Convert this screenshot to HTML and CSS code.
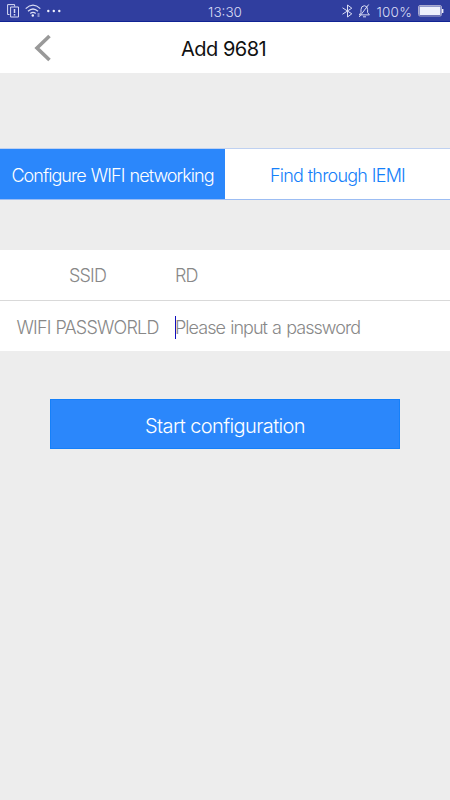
FILE: index.html
```html
<!DOCTYPE html>
<html lang="en">
<head>
    <meta charset="UTF-8">
    <meta name="viewport" content="width=device-width, initial-scale=1.0">
    <title>Add 9681</title>
    <link rel="stylesheet" href="styles.css">
</head>
<body>
    <div class="statusbar">
        <div class="status-left">
            <svg width="13" height="14" viewBox="0 0 13 14">
                <path d="M2.5 10.5H.6V.6h7v1.9M3.6 3h7.9v10H3.6z"/>
                <path d="M7.5 5v4M7.5 10v1.4" stroke-width="1.5"/>
            </svg>
            <svg width="17" height="14" viewBox="0 0 17 14">
                <path d="M.7 4.6Q8 -2.4 15.3 4.6M3 7.3q5-4.6 10 0M5.3 9.6q2.7-2.4 5.4 0" stroke-width="1.3"/>
                <circle class="fill" cx="7.8" cy="11.5" r="1.2"/>
                <path d="M12.5 10h2M12.5 12h2"/>
            </svg>
            <svg class="dots" width="14" height="14" viewBox="0 0 14 14">
                <circle class="fill" cx="1.3" cy="7" r="1.2"/>
                <circle class="fill" cx="6.8" cy="7" r="1.2"/>
                <circle class="fill" cx="12.3" cy="7" r="1.2"/>
            </svg>
        </div>
        <span class="time">13:30</span>
        <div class="status-right">
            <svg width="11" height="14" viewBox="0 0 11 14">
                <path d="M.5 3.8l9.3 6L5.5 13V1l4.3 3.2-9.3 6"/>
            </svg>
            <svg class="bell" width="13" height="14" viewBox="0 0 13 14">
                <path d="M3 8.5V5.5Q3 2 6.3 1.7 9.6 2 9.6 5.5v3l1.8 2.4H1.2zM5 12.8h3M10.7.5L1.2 13"/>
            </svg>
            <span class="percent">100%</span>
            <svg class="battery" width="26" height="12" viewBox="0 0 26 12">
                <rect x=".5" y=".5" width="23" height="10.5" rx="1.5" stroke="#a9a9cf"/>
                <rect class="fill" x="1.5" y="1.5" width="21" height="8.5"/>
                <rect class="fill" x="24" y="4" width="1.4" height="4"/>
            </svg>
        </div>
    </div>

    <div class="header">
        <svg class="back" width="18" height="28" viewBox="0 0 18 28">
            <path d="M15.5 2L3 14l12.5 12"/>
        </svg>
        <h1>Add 9681</h1>
    </div>

    <div class="tabs">
        <div class="tab active"><span>Configure WIFI networking</span></div>
        <div class="tab"><span>Find through IEMI</span></div>
    </div>

    <div class="form">
        <div class="row">
            <div class="label">SSID</div>
            <div class="value">RD</div>
        </div>
        <div class="row">
            <div class="label">WIFI PASSWORLD</div>
            <div class="value hint">Please input a password</div>
        </div>
    </div>

    <button class="start">Start configuration</button>
</body>
</html>
```
FILE: styles.css
```css
body {
    margin: 0;
    height: 800px;
    background-color: #ededed;
    font-family: Inter, "Liberation Sans", sans-serif;
    font-weight: 300;
    font-size: 18px;
    letter-spacing: -0.8px;
    word-spacing: 0.5px;
    overflow: hidden;
}
.statusbar {
    display: grid;
    grid-template-columns: 1fr auto 1fr;
    align-items: center;
    height: 22px;
    box-sizing: border-box;
    border-bottom: 1px solid #102394;
    padding: 1px 7px 0;
    background-color: #303e9f;
    color: #d9dcf4;
    letter-spacing: 0;
}
.statusbar svg {
    fill: none;
    stroke: #d9dcf4;
    stroke-width: 1;
}
.statusbar .fill {
    fill: #eef0fc;
    stroke: none;
}
.status-left, .status-right {
    display: flex;
    align-items: center;
    gap: 5px;
}
.status-right {
    justify-content: flex-end;
}
.time, .percent {
    padding-top: 1px;
    font-size: 13.5px;
}
.percent {
    letter-spacing: 0.2px;
}
.bell {
    margin-right: 1px;
}
.battery {
    margin-right: -1px;
    margin-left: 1px;
}
.header {
    display: flex;
    align-items: center;
    height: 51px;
    background-color: #fff;
}
.back {
    width: 18px;
    margin: 0 0 0 34px;
    fill: none;
    stroke: #999;
    stroke-width: 3.6;
}
h1 {
    flex: 1;
    margin: 3px 55px 0 0;
    text-align: center;
    font-size: 20px;
    font-weight: 400;
    letter-spacing: -0.6px;
    color: #111;
}
.tabs {
    display: flex;
    height: 50px;
    margin-top: 75px;
    border-top: 1px solid #bfd1f1;
    border-bottom: 1px solid #9cbdf3;
    background-color: #fff;
}
.tab {
    display: flex;
    align-items: center;
    justify-content: center;
    width: 50%;
    padding-top: 2px;
    white-space: nowrap;
    box-sizing: border-box;
    color: #1580fa;
}
.tab.active {
    background-color: #2b87fb;
    color: #fff;
    letter-spacing: -0.95px;
    word-spacing: 1px;
}
.form {
    margin-top: 50px;
    background-color: #fff;
    color: #888;
}
.row {
    display: flex;
    align-items: center;
    height: 49px;
    padding-top: 1px;
}
.row:first-child {
    border-bottom: 1px solid #d9d9d9;
}
.row:last-child {
    height: 48px;
    padding-top: 2px;
}
.label {
    width: 175px;
    text-align: center;
    white-space: nowrap;
}
.value {
    line-height: 23px;
}
.hint {
    border-left: 1px solid #1010c0;
    letter-spacing: -0.95px;
    word-spacing: 1px;
    text-indent: -1px;
}
.start {
    display: block;
    width: 350px;
    height: 50px;
    margin: 48px auto 0;
    padding: 3px 0 0;
    border: 1px solid #1580fa;
    background-color: #2b87fb;
    color: #fff;
    font-family: inherit;
    font-size: 20px;
    font-weight: 300;
    letter-spacing: -0.6px;
}
```
